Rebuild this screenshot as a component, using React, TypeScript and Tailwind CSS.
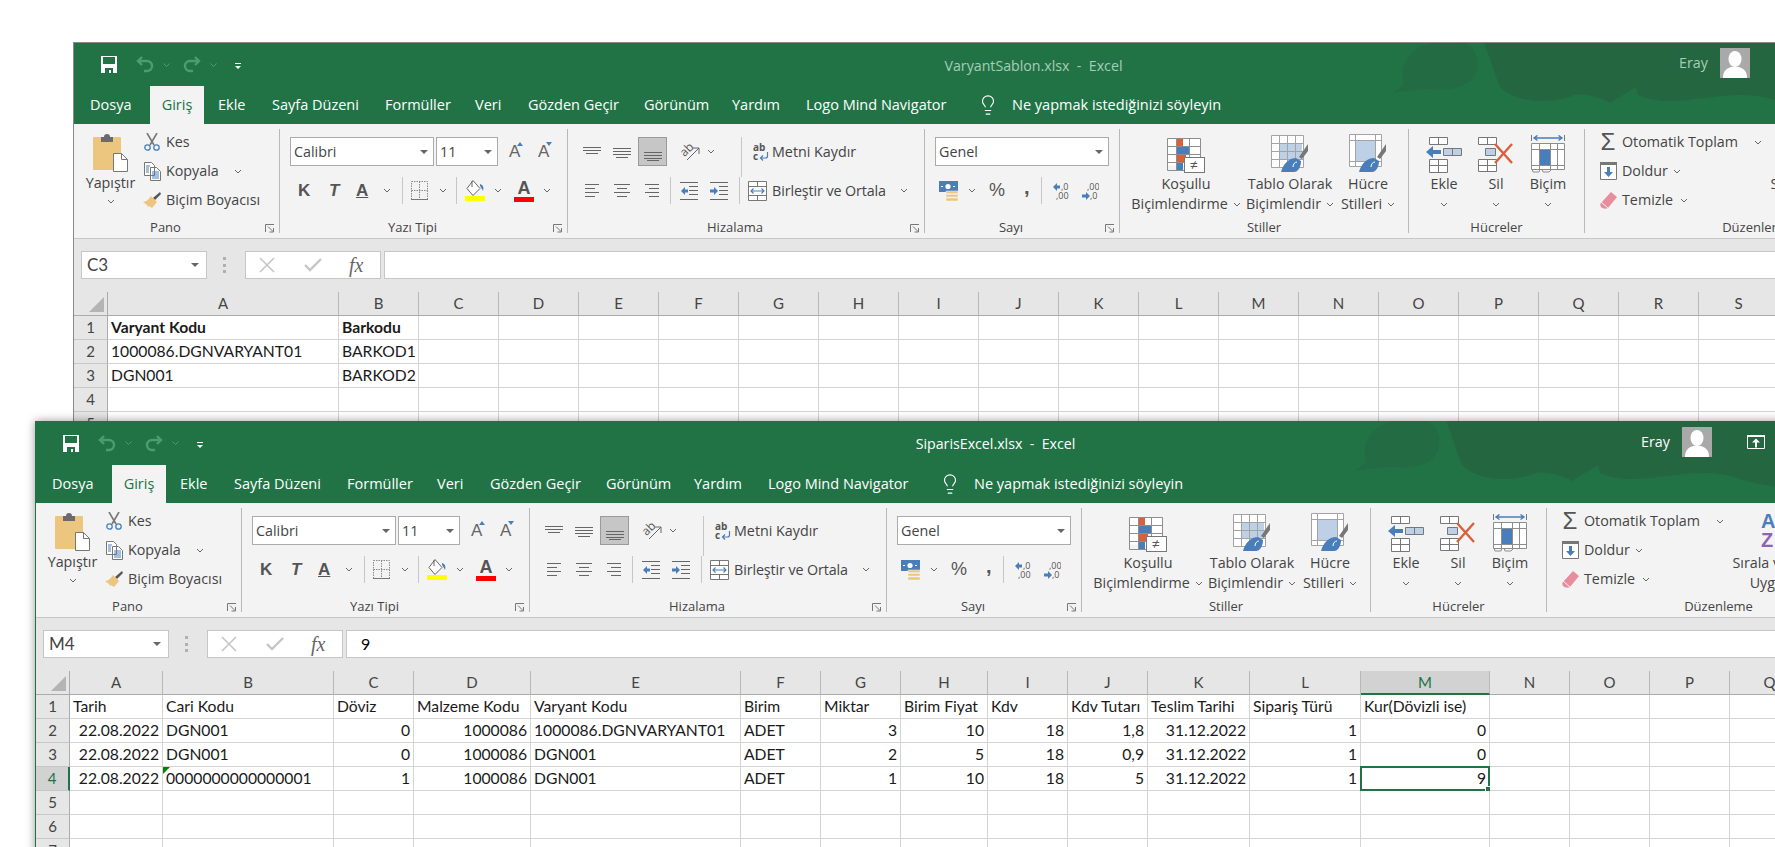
import { ReactNode } from 'react';
import { Lightbulb } from 'lucide-react';

const BLUE = '#4a7ebb';
const LIGHT = '#bdd0e6';
const RED = '#d9603b';

const Chevron = ({ className = '' }: { className?: string }) => (
  <svg width="8" height="5" viewBox="0 0 8 5" className={`shrink-0 ${className}`}>
    <path d="M1 1l3 3 3-3" fill="none" stroke="#666" strokeWidth="1" />
  </svg>
);

const Caret = () => (
  <svg width="8" height="4" viewBox="0 0 8 4" className="shrink-0">
    <path d="M0 0h8L4 4z" fill="#666" />
  </svg>
);

const Launcher = () => (
  <svg width="10" height="9" viewBox="0 0 10 9">
    <path d="M.5 8V.5H9M3 2.5l5 5M8.5 4v4H4.5" fill="none" stroke="#777" />
  </svg>
);

const VSep = ({ className = 'h-[28px]' }: { className?: string }) => <div className={`w-px bg-[#c6c6c6] shrink-0 ${className}`} />;

// lines for the alignment buttons, each is [x, y, width]
const Lines = ({ w, h, rows }: { w: number; h: number; rows: number[][] }) => (
  <svg width={w} height={h} viewBox={`0 0 ${w} ${h}`} className="shrink-0">
    {rows.map((r, i) => (
      <rect key={i} x={r[0]} y={r[1]} width={r[2]} height="1" fill="#666" />
    ))}
  </svg>
);

const Save = () => (
  <svg width="16" height="17" viewBox="0 0 16 17">
    <path d="M0 0h16v17H0z" fill="#fff" />
    <path d="M2 1h12v7H2zM4 12h8v5h-2v-3H8v3H4z" fill="#217346" />
  </svg>
);

const Undo = ({ flip = false }: { flip?: boolean }) => (
  <svg width="18" height="17" viewBox="0 0 18 17" style={flip ? { transform: 'scaleX(-1)' } : undefined}>
    <path d="M6 1L2 5l4 4M2 5h9a4.5 4.5 0 0 1 0 10H8" fill="none" stroke="#4c9c70" strokeWidth="2.4" />
  </svg>
);

const Clipboard = () => (
  <svg width="35" height="39" viewBox="0 0 35 39">
    <rect x="0" y="4" width="28" height="33" rx="1" fill="#ecc67f" />
    <path d="M8 4h3a3 3 0 0 1 6 0h3v5H8z" fill="#6b6b6b" />
    <path d="M20.5 20.5h8l6 6v12h-14z" fill="#fff" stroke="#777" />
    <path d="M28.5 20.5v6h6" fill="none" stroke="#777" />
  </svg>
);

const Scissors = () => (
  <svg width="16" height="18" viewBox="0 0 16 18">
    <path d="M3 0l7 12M13 0L6 12" stroke="#777" strokeWidth="1.6" fill="none" />
    <circle cx="3.5" cy="14.5" r="2.7" fill="none" stroke={BLUE} strokeWidth="1.3" />
    <circle cx="12.5" cy="14.5" r="2.7" fill="none" stroke={BLUE} strokeWidth="1.3" />
  </svg>
);

const Copy = () => (
  <svg width="17" height="19" viewBox="0 0 17 19">
    <path d="M.5.5h7l3 3v10H.5zM6.5 5.5h6l4 4v9h-10z" fill="#fff" stroke="#777" />
    <path d="M2 4h4M2 6h3M2 8h3M2 10h3M8 10h7M8 12h7M8 14h7M8 16h7" stroke={BLUE} />
  </svg>
);

const Brush = () => (
  <svg width="18" height="17" viewBox="0 0 18 17">
    <path d="M17 0l1 2-6 6-2-2z" fill="#555" />
    <path d="M8 4l6 6-5 6-3-2-1 1-1-2-4-3c3 0 6-3 8-6z" fill="#ecc67f" />
  </svg>
);

const BordersIcon = () => (
  <svg width="17" height="19" viewBox="0 0 17 19">
    <path d="M.5.5h16v18H.5zM.5 9.5h16M8.5.5v18" fill="none" stroke="#8a8a8a" strokeDasharray="1.5 1" />
    <path d="M0 18.5h17" stroke="#777" />
  </svg>
);

const FillIcon = () => (
  <svg width="20" height="21" viewBox="0 0 20 21">
    <path d="M8 .5l-6 8 6 7 7-7z" fill="#fff" stroke="#666" />
    <path d="M7 1v6" stroke="#666" />
    <path d="M15 4c3 1 4 3 3 7-1-2-2-4-3-5z" fill={BLUE} />
    <rect x="0" y="16" width="20" height="5" fill="#ffff00" />
  </svg>
);

const OrientIcon = () => (
  <svg width="19" height="19" viewBox="0 0 19 19">
    <text x="0" y="11" fontSize="12" fill="#555" fontFamily="Open Sans" transform="rotate(-45 7 9)">ab</text>
    <path d="M6 18L18 6M12 6h6v6" fill="none" stroke="#666" />
  </svg>
);

const WrapIcon = () => (
  <svg width="16" height="18" viewBox="0 0 16 18">
    <text x="0" y="8" fontSize="10" fontWeight="700" fill="#555" fontFamily="Open Sans">ab</text>
    <text x="0" y="17" fontSize="10" fontWeight="700" fill="#555" fontFamily="Open Sans">c</text>
    <path d="M14.5 9v4a2 2 0 0 1-2 2H8M10 12.5L7.5 15l2.5 2.5" fill="none" stroke={BLUE} strokeWidth="1.2" />
  </svg>
);

const MergeIcon = () => (
  <svg width="19" height="20" viewBox="0 0 19 20">
    <path d="M.5.5h18v19H.5zM.5 5.5h18M.5 14.5h18M9.5.5v5M9.5 14.5v5" fill="#fff" stroke="#777" />
    <path d="M3 10h13M5.5 7.5L3 10l2.5 2.5M13.5 7.5L16 10l-2.5 2.5" fill="none" stroke={BLUE} strokeWidth="1.2" />
  </svg>
);

const IndentIcon = ({ out = false }: { out?: boolean }) => (
  <svg width="18" height="18" viewBox="0 0 18 18">
    <path d="M0 .5h18M0 17.5h18M9 4.5h9M9 8.5h9M9 12.5h9" stroke="#666" />
    <path d={out ? 'M1 9l4-4v2.5h3v3H5V13z' : 'M8 9L4 5v2.5H0v3h4V13z'} fill={BLUE} />
  </svg>
);

const MoneyIcon = () => (
  <svg width="20" height="20" viewBox="0 0 20 20">
    <rect x="0" y="0" width="19" height="11" fill={BLUE} />
    <circle cx="9" cy="5.5" r="2.6" fill="#fff" />
    <rect x="2" y="5" width="2" height="1" fill="#fff" />
    <rect x="14" y="5" width="2" height="1" fill="#fff" />
    <path d="M7 10h12v2.5H7zM7 13.5h12V16H7zM7 17h12v3H7z" fill="#ecc67f" stroke="#f3f3f3" strokeWidth=".5" />
  </svg>
);

const DecIcon = ({ more = false }: { more?: boolean }) => (
  <svg width="17" height="18" viewBox="0 0 17 18">
    <text x={more ? 8 : 5} y="8" fontSize="9" fill="#555" fontFamily="Open Sans">{more ? ',0' : ',00'}</text>
    <text x={more ? 3 : 8} y="17" fontSize="9" fill="#555" fontFamily="Open Sans">{more ? ',00' : ',0'}</text>
    <path d={more ? 'M0 5l4-4v2.5h3v3H4V9z' : 'M8 14l-4-4v2.5H0v3h4V18z'} fill={BLUE} />
  </svg>
);

const CondIcon = () => (
  <svg width="38" height="35" viewBox="0 0 38 35">
    <path d="M.5.5h33v27H.5z" fill="#fff" />
    <path d="M10 1h6v7h-6z" fill={RED} />
    <path d="M10 9h12v7H10z" fill={BLUE} />
    <path d="M10 17h9v7h-9z" fill={RED} />
    <path d="M10 25h6v8h-6z" fill={BLUE} />
    <path d="M.5.5h33v32H.5zM.5 8.5h33M.5 16.5h33M.5 24.5h33M9.5.5v32M22.5.5v32" fill="none" stroke="#8d8d8d" />
    <rect x="17.5" y="19.5" width="20" height="15" fill="#fff" stroke="#777" />
    <text x="23" y="32" fontSize="14" fill="#555" fontFamily="Open Sans">≠</text>
  </svg>
);

const BrushTip = () => (
  <g>
    <path d="M37 10l-9 13 3 2 6-8z" fill="#777" />
    <path d="M10 38c2-8 8-14 15-14l5 3c0 6-3 11-7 11z" fill={BLUE} />
    <path d="M22 33c0-3 2-5 4-5" fill="none" stroke="#fff" />
  </g>
);

const TableIcon = () => (
  <svg width="38" height="39" viewBox="0 0 38 39">
    <path d="M.5 1.5h32v32H.5z" fill="#fff" />
    <path d="M9 9h22v16H9z" fill={LIGHT} />
    <path d="M.5 1.5h32v32H.5zM.5 9.5h32M.5 17.5h32M.5 25.5h32M8.5 1.5v32M16.5 1.5v32M24.5 1.5v32" fill="none" stroke="#a3a3a3" />
    <BrushTip />
  </svg>
);

const StyleIcon = () => (
  <svg width="38" height="39" viewBox="0 0 38 39">
    <path d="M.5.5h32v32H.5z" fill="#fff" />
    <path d="M7 7h19v20H7z" fill={LIGHT} />
    <path d="M.5.5h32v32H.5zM.5 6.5h32M.5 27.5h32M6.5.5v32M26.5.5v32" fill="none" stroke="#a3a3a3" />
    <BrushTip />
  </svg>
);

const InsertIcon = () => (
  <svg width="36" height="36" viewBox="0 0 36 36">
    <path d="M3.5.5h18v7h-18zM12.5.5v7M3.5 22.5h18v13h-18zM3.5 28.5h18M12.5 22.5v13" fill="#fff" stroke="#777" />
    <path d="M17.5 11.5h18v7h-18zM26.5 11.5v7" fill={LIGHT} stroke="#777" />
    <path d="M0 15l7-6v4h8v4H7v4z" fill={BLUE} />
  </svg>
);

const DeleteIcon = () => (
  <svg width="36" height="36" viewBox="0 0 36 36">
    <path d="M.5.5h18v7H.5zM9.5.5v7M.5 22.5h18v12H.5zM.5 28.5h18M9.5 22.5v12" fill="#fff" stroke="#777" />
    <path d="M7.5 11.5h10v7h-10z" fill={LIGHT} stroke="#777" />
    <path d="M17 7l17 19M34 7L17 26" stroke={RED} strokeWidth="2.4" />
  </svg>
);

const FormatIcon = () => (
  <svg width="35" height="38" viewBox="0 0 35 38">
    <path d="M.5 0v6M33.5 0v6" stroke="#777" />
    <path d="M3 3h28M6.5 .5L3 3l3.5 2.5M27.5 .5L31 3l-3.5 2.5" fill="none" stroke={BLUE} strokeWidth="1.4" />
    <path d="M.5 8.5h33v26H.5z" fill="#fff" />
    <path d="M9 15h10v16H9z" fill={BLUE} />
    <path d="M.5 8.5h33v26H.5zM.5 14.5h33M.5 30.5h33M8.5 8.5v26M19.5 8.5v26M26.5 8.5v26" fill="none" stroke="#8d8d8d" />
    <path d="M1 34l1 3h6l1-3M11 34l1 3h6l3-3" fill="none" stroke="#8d8d8d" />
  </svg>
);

const FillDown = () => (
  <svg width="17" height="18" viewBox="0 0 17 18">
    <path d="M.5.5h16v17H.5z" fill="#fff" stroke="#777" />
    <path d="M0 0h17v3H0z" fill="#777" />
    <path d="M8.5 15l-4.5-5h3V5h3v5h3z" fill={BLUE} />
  </svg>
);

const Eraser = () => (
  <svg width="17" height="17" viewBox="0 0 17 17">
    <path d="M11 0l6 5-9 11c-2 1-5 1-7-1-1-2-1-3 0-4z" fill="#e98d9d" />
    <path d="M1 10l7 6" stroke="#f3f3f3" />
  </svg>
);

const Avatar = () => (
  <svg width="30" height="30" viewBox="0 0 30 30" className="shrink-0">
    <rect width="30" height="30" fill="#a9a9a9" />
    <ellipse cx="15" cy="11" rx="6.5" ry="8" fill="#fff" />
    <path d="M3 30c0-7 3-9 8-11h8c5 2 8 4 8 11z" fill="#fff" />
  </svg>
);

const SmallRow = ({ icon, label, width, chevron }: { icon: ReactNode; label: string; width: number; chevron?: string }) => (
  <div className="flex items-center h-[26px]">
    <div className="w-[18px] flex justify-center shrink-0">{icon}</div>
    <span className="ml-[5px] whitespace-nowrap" style={{ width }}>{label}</span>
    {chevron && <Chevron className={chevron} />}
  </div>
);

const BigButton = ({ icon, lines, width, chevron = true }: { icon: ReactNode; lines: string[]; width: number; chevron?: boolean }) => (
  <div className="flex flex-col items-center shrink-0" style={{ width }}>
    <div className="h-[44px] flex items-end justify-center">{icon}</div>
    <div className="h-[20px] leading-[20px] mt-[1px] whitespace-nowrap">{lines[0]}</div>
    <div className="h-[20px] flex items-center gap-[5px] whitespace-nowrap">
      {lines[1] && <span>{lines[1]}</span>}
      {chevron && <Chevron />}
    </div>
  </div>
);

const Group = ({ width, label, launcher = true, children }: { width: number; label: string; launcher?: boolean; children: ReactNode }) => (
  <>
    <div className="flex flex-col shrink-0 h-[109px]" style={{ width }}>
      <div className="h-[89px]">{children}</div>
      <div className={`relative h-[20px] leading-[19px] text-center text-[13px] ${launcher ? 'pr-[22px]' : ''}`}>
        {label}
        {launcher && (
          <div className="absolute right-[4px] top-[6px] flex">
            <Launcher />
          </div>
        )}
      </div>
    </div>
    <div className="w-px h-[104px] bg-[#b9b9b9] shrink-0" />
  </>
);

const Ribbon = () => (
  <div className="flex h-[114px] pt-[5px] bg-[#f3f3f3] text-[#444] text-[14.3px] overflow-hidden">
    <Group width={205} label="Pano">
      <div className="flex">
        <div className="ml-[4px] w-[65px] flex flex-col items-center">
          <div className="mt-[4px] h-[39px]">
            <Clipboard />
          </div>
          <div className="mt-[1px] h-[20px] leading-[20px]">Yapıştır</div>
          <Chevron className="mt-[6px]" />
        </div>
        <div className="flex flex-col gap-[3px]">
          <SmallRow icon={<Scissors />} label="Kes" width={30} />
          <SmallRow icon={<Copy />} label="Kopyala" width={53} chevron="ml-[15px]" />
          <SmallRow icon={<Brush />} label="Biçim Boyacısı" width={94} />
        </div>
      </div>
    </Group>

    <Group width={287} label="Yazı Tipi">
      <div className="flex items-center mt-[8px] h-[29px] ml-[10px]">
        <div className="w-[144px] h-[29px] bg-white border border-[#ababab] flex items-center justify-between pl-[3px] pr-[5px]">
          <span>Calibri</span>
          <Caret />
        </div>
        <div className="ml-[2px] w-[62px] h-[29px] bg-white border border-[#ababab] flex items-center justify-between pl-[3px] pr-[5px]">
          <span>11</span>
          <Caret />
        </div>
        <div className="ml-[11px] w-[16px] h-[20px] flex items-start">
          <span className="text-[17px] leading-[20px] text-[#666] font-['Liberation_Sans']">A</span>
          <svg width="6" height="4" viewBox="0 0 6 4" className="-ml-[3px]">
            <path d="M0 4l3-4 3 4z" fill={BLUE} />
          </svg>
        </div>
        <div className="ml-[13px] w-[16px] h-[20px] flex items-start">
          <span className="text-[17px] leading-[20px] text-[#666] font-['Liberation_Sans']">A</span>
          <svg width="6" height="4" viewBox="0 0 6 4" className="-ml-[3px]">
            <path d="M0 0l3 4 3-4z" fill={BLUE} />
          </svg>
        </div>
      </div>
      <div className="flex items-center mt-[11px] h-[27px] font-['Liberation_Sans'] text-[#555]">
        <span className="ml-[18px] w-[11px] text-[17px] font-bold">K</span>
        <span className="ml-[20px] w-[11px] text-[17px] font-bold italic">T</span>
        <span className="ml-[16px] w-[15px] text-[17px] font-bold underline">A</span>
        <Chevron className="ml-[12px]" />
        <VSep className="ml-[11px] h-[27px]" />
        <div className="ml-[8px] flex"><BordersIcon /></div>
        <Chevron className="ml-[11px]" />
        <VSep className="ml-[9px] h-[27px]" />
        <div className="ml-[8px] flex"><FillIcon /></div>
        <Chevron className="ml-[9px]" />
        <div className="ml-[12px] w-[20px] flex flex-col items-center">
          <span className="text-[18px] leading-[16px] font-bold">A</span>
          <div className="w-[20px] h-[5px] bg-[#ff0000] mt-[1px]" />
        </div>
        <Chevron className="ml-[9px]" />
      </div>
    </Group>

    <Group width={356} label="Hizalama">
      <div className="flex items-center mt-[8px] h-[29px]">
        <div className="ml-[15px] flex"><Lines w={18} h={18} rows={[[0, 4, 18], [0, 7, 18], [3, 10, 12]]} /></div>
        <div className="ml-[12px] flex"><Lines w={18} h={18} rows={[[0, 5, 18], [0, 8, 18], [0, 11, 18], [3, 14, 12]]} /></div>
        <div className="ml-[7px] w-[29px] h-[29px] bg-[#c6c6c6] border border-[#9a9a9a] flex items-center justify-center">
          <Lines w={18} h={18} rows={[[0, 9, 18], [0, 12, 18], [0, 15, 18], [3, 17, 12]]} />
        </div>
        <VSep className="ml-[4px]" />
        <div className="ml-[9px] flex"><OrientIcon /></div>
        <Chevron className="ml-[7px]" />
        <VSep className="ml-[26px] h-[40px] self-start" />
        <div className="ml-[11px] flex"><WrapIcon /></div>
        <span className="ml-[3px] whitespace-nowrap">Metni Kaydır</span>
      </div>
      <div className="flex items-center mt-[11px] h-[27px]">
        <div className="ml-[17px] flex"><Lines w={14} h={13} rows={[[0, 0, 14], [0, 4, 10], [0, 8, 14], [0, 12, 10]]} /></div>
        <div className="ml-[15px] flex"><Lines w={16} h={13} rows={[[0, 0, 16], [3, 4, 10], [0, 8, 16], [3, 12, 10]]} /></div>
        <div className="ml-[15px] flex"><Lines w={14} h={13} rows={[[0, 0, 14], [4, 4, 10], [0, 8, 14], [4, 12, 10]]} /></div>
        <VSep className="ml-[11px] h-[27px]" />
        <div className="ml-[9px] flex"><IndentIcon out /></div>
        <div className="ml-[12px] flex"><IndentIcon /></div>
        <VSep className="ml-[11px] h-[27px]" />
        <div className="ml-[8px] flex"><MergeIcon /></div>
        <span className="ml-[5px] w-[113px] whitespace-nowrap tracking-[-0.1px]">Birleştir ve Ortala</span>
        <Chevron className="ml-[15px]" />
      </div>
    </Group>

    <Group width={194} label="Sayı">
      <div className="mt-[8px] ml-[10px] w-[174px] h-[29px] bg-white border border-[#ababab] flex items-center justify-between pl-[3px] pr-[5px]">
        <span>Genel</span>
        <Caret />
      </div>
      <div className="flex items-center mt-[11px] h-[27px]">
        <div className="ml-[14px] flex"><MoneyIcon /></div>
        <Chevron className="ml-[9px]" />
        <span className="ml-[13px] w-[17px] text-[18px] font-['Liberation_Sans'] text-[#555]">%</span>
        <span className="ml-[18px] w-[5px] text-[20px] font-bold font-['Liberation_Sans'] text-[#555] leading-[12px] -mt-[8px]">,</span>
        <VSep className="ml-[12px] h-[27px]" />
        <div className="ml-[11px] flex"><DecIcon more /></div>
        <div className="ml-[12px] flex"><DecIcon /></div>
      </div>
    </Group>

    <Group width={288} label="Stiller" launcher={false}>
      <div className="flex ml-[6px]">
        <BigButton icon={<CondIcon />} lines={['Koşullu', 'Biçimlendirme']} width={120} />
        <BigButton icon={<TableIcon />} lines={['Tablo Olarak', 'Biçimlendir']} width={88} />
        <BigButton icon={<StyleIcon />} lines={['Hücre', 'Stilleri']} width={68} />
      </div>
    </Group>

    <Group width={175} label="Hücreler" launcher={false}>
      <div className="flex ml-[9px]">
        <BigButton icon={<InsertIcon />} lines={['Ekle', '']} width={52} />
        <BigButton icon={<DeleteIcon />} lines={['Sil', '']} width={52} />
        <BigButton icon={<FormatIcon />} lines={['Biçim', '']} width={52} />
      </div>
    </Group>

    <Group width={343} label="Düzenleme" launcher={false}>
      <div className="flex ml-[14px]">
        <div className="flex flex-col gap-[3px] w-[166px]">
          <SmallRow icon={<span className="text-[24px] leading-none text-[#555] font-['Liberation_Sans']">Σ</span>} label="Otomatik Toplam" width={117} chevron="ml-[15px]" />
          <SmallRow icon={<FillDown />} label="Doldur" width={46} chevron="ml-[5px]" />
          <SmallRow icon={<Eraser />} label="Temizle" width={52} chevron="ml-[6px]" />
        </div>
        <BigButton
          icon={
            <div className="w-[36px] h-[40px] flex flex-col font-bold text-[20px] leading-[19px] font-['Liberation_Sans']">
              <span className="text-[#4a7ebb]">A</span>
              <span className="text-[#8e63b5]">Z</span>
            </div>
          }
          lines={['Sırala ve Filtre', 'Uygula']}
          width={104}
        />
      </div>
    </Group>
  </div>
);

const TABS = [
  { label: 'Dosya', w: 60 },
  { label: 'Giriş', w: 54, active: true },
  { label: 'Ekle', w: 68, pl: true },
  { label: 'Sayfa Düzeni', w: 113 },
  { label: 'Formüller', w: 90 },
  { label: 'Veri', w: 53 },
  { label: 'Gözden Geçir', w: 116 },
  { label: 'Görünüm', w: 88 },
  { label: 'Yardım', w: 74 },
  { label: 'Logo Mind Navigator', w: 174 },
];

const TitleBar = ({ title, active }: { title: string; active: boolean }) => (
  <div className={`relative h-[82px] bg-[#217346] overflow-hidden ${active ? '' : 'border-t border-[#8a8a8a]'}`}>
    <svg width="1918" height="82" viewBox="0 0 1918 82" className="absolute left-0 top-0">
      <path d="M1318 50c6-4 10-6 12-10-6-18 8-40 34-40h28c10 6 14 18 10 30-6 14-26 18-44 16-12 0-26 2-40 4z" fill="#236b42" />
      <path d="M1410 0c6 14 10 30 16 44 18 18 56 16 74 8 14-2 28 4 36 8l26-16 2 8c40 18 90-12 140 6 60 20 120 0 214-2V0z" fill="#24663f" />
    </svg>
    <div className={`relative grid grid-cols-[1fr_auto_1fr] items-center ${active ? 'h-[44px]' : 'h-[43px]'}`}>
      <div className="flex items-center pl-[27px]">
        <Save />
        <div className="ml-[19px] flex"><Undo /></div>
        <svg width="7" height="4" viewBox="0 0 7 4" className="ml-[9px]"><path d="M.5.5l3 3 3-3" fill="none" stroke="#4c9c70" /></svg>
        <div className="ml-[13px] flex"><Undo flip /></div>
        <svg width="7" height="4" viewBox="0 0 7 4" className="ml-[9px]"><path d="M.5.5l3 3 3-3" fill="none" stroke="#4c9c70" /></svg>
        <svg width="6" height="6" viewBox="0 0 6 6" className="ml-[18px] mt-[3px]"><path d="M0 0h6v1H0zM0 3h6L3 6z" fill="#fff" /></svg>
      </div>
      <div className={`text-[14.2px] whitespace-nowrap mt-[2px] ${active ? 'text-white' : 'text-[#a6cdb6]'}`}>{title}&nbsp;&nbsp;-&nbsp;&nbsp;Excel</div>
      <div className={`flex items-center justify-end pr-[190px] text-[14.3px] -mt-[1px] ${active ? 'text-white' : 'text-[#a6cdb6]'}`}>
        <span className="w-[28px] mr-[13px] -mt-[2px]">Eray</span>
        <div className="-mt-[2px] flex"><Avatar /></div>
        <svg width="18" height="14" viewBox="0 0 18 14" className="ml-[35px] -mt-[2px]">
          <path d="M.5.5h17v13H.5z" fill="none" stroke="#fff" />
          <path d="M0 0h18v2H0zM9 3.5L5 7.5h3v5h2v-5h3z" fill="#fff" />
        </svg>
      </div>
    </div>
    <div className="relative flex h-[38px] pl-[16px] text-white text-[14.5px]">
      {TABS.map((t) => (
        <div
          key={t.label}
          className={`shrink-0 flex items-center whitespace-nowrap ${t.active ? 'bg-[#f3f3f3] text-[#217346] justify-center' : ''} ${t.pl ? 'pl-[14px]' : ''}`}
          style={{ width: t.w }}
        >
          {t.label}
        </div>
      ))}
      <div className="w-[32px] flex items-center -ml-[3px]">
        <Lightbulb size={22} strokeWidth={1.25} />
      </div>
      <div className="flex items-center ml-[3px] whitespace-nowrap">Ne yapmak istediğinizi söyleyin</div>
    </div>
  </div>
);

const FormulaBar = ({ cell, value }: { cell: string; value: string }) => (
  <div className="h-[54px] bg-[#e6e6e6] border-t border-[#c6c6c6] pt-[12px] flex items-start text-[#444]">
    <div className="ml-[7px] w-[126px] h-[28px] bg-white border border-[#c6c6c6] flex items-center justify-between pl-[5px] pr-[7px] text-[17px] font-['Lato']">
      <span>{cell}</span>
      <Caret />
    </div>
    <div className="ml-[16px] w-[3px] h-[16px] mt-[6px] border-l-[3px] border-dotted border-[#b0b0b0]" />
    <div className="ml-[19px] w-[136px] h-[28px] bg-white border border-[#c6c6c6] flex items-center">
      <svg width="16" height="16" viewBox="0 0 16 16" className="ml-[13px]">
        <path d="M1 1l14 14M15 1L1 15" stroke="#c6c6c6" strokeWidth="1.6" />
      </svg>
      <svg width="18" height="14" viewBox="0 0 18 14" className="ml-[29px]">
        <path d="M1 7l5 5L17 1" fill="none" stroke="#c6c6c6" strokeWidth="2.4" />
      </svg>
      <span className="ml-[27px] font-['Liberation_Serif'] italic text-[20px] text-[#666]">fx</span>
    </div>
    <div className="ml-[3px] flex-1 h-[28px] bg-white border border-[#c6c6c6] flex items-center pl-[14px] text-[16px] font-['Lato'] text-black">{value}</div>
  </div>
);

type Cell = { t: string; right?: boolean; bold?: boolean; flag?: boolean };

const Sheet = ({ cols, rows, rowCount, selected }: { cols: { l: string; w: number }[]; rows: Cell[][]; rowCount: number; selected?: { row: number; col: number } }) => (
  <div className="font-['Lato'] text-[15.7px] leading-none bg-white">
    <div className="flex h-[24px] bg-[#e6e6e6] text-[#444]">
      <div className="w-[34px] shrink-0 border-r border-b border-[#ababab] flex items-end justify-end pr-[3px] pb-[3px]">
        <svg width="15" height="15" viewBox="0 0 15 15"><path d="M15 0v15H0z" fill="#b4b4b4" /></svg>
      </div>
      {cols.map((c, i) => {
        const sel = selected?.col === i;
        return (
          <div
            key={c.l}
            className={`shrink-0 flex items-center justify-center border-r border-[#b8b8b8] text-[15px] ${sel ? 'bg-[#d2d2d2] text-[#217346] border-b-2 border-b-[#217346]' : 'border-b border-b-[#ababab]'}`}
            style={{ width: c.w }}
          >
            {c.l}
          </div>
        );
      })}
    </div>
    {Array.from({ length: rowCount }).map((_, r) => (
      <div key={r} className="flex h-[24px]">
        <div className={`w-[34px] shrink-0 flex items-center justify-center text-[15px] border-b border-[#c6c6c6] border-r ${selected?.row === r ? 'bg-[#d2d2d2] text-[#217346] border-r-2 border-r-[#217346]' : 'bg-[#e6e6e6] text-[#444] border-r-[#ababab]'}`}>
          {r + 1}
        </div>
        {cols.map((c, i) => {
          const cell = rows[r]?.[i];
          return (
            <div
              key={c.l}
              className={`relative shrink-0 flex items-center px-[3px] whitespace-nowrap border-r border-b border-[#d4d4d4] text-[#1a1a1a] ${cell?.right ? 'justify-end' : ''} ${cell?.bold ? 'font-bold' : ''}`}
              style={{ width: c.w }}
            >
              {cell?.t}
              {cell?.flag && (
                <svg width="7" height="7" viewBox="0 0 7 7" className="absolute left-0 top-0">
                  <path d="M0 0h7L0 7z" fill="#0a7c0a" />
                </svg>
              )}
              {selected?.row === r && selected?.col === i && (
                <div className="absolute -left-px -top-px -right-px -bottom-px border-2 border-[#217346]">
                  <div className="absolute -right-[3px] -bottom-[3px] w-[6px] h-[6px] bg-[#217346] border border-white" />
                </div>
              )}
            </div>
          );
        })}
      </div>
    ))}
  </div>
);

const LETTERS = ['A', 'B', 'C', 'D', 'E', 'F', 'G', 'H', 'I', 'J', 'K', 'L', 'M', 'N', 'O', 'P', 'Q', 'R', 'S', 'T', 'U', 'V', 'W'];

const TOP_WIDTHS = [231, 80];
const BOTTOM_WIDTHS = [93, 171, 80, 117, 210, 80, 80, 87, 80, 80, 102, 111, 129];

const topCols = LETTERS.map((l, i) => ({ l, w: TOP_WIDTHS[i] ?? 80 }));
const bottomCols = LETTERS.map((l, i) => ({ l, w: BOTTOM_WIDTHS[i] ?? 80 }));

const topRows: Cell[][] = [
  [{ t: 'Varyant Kodu', bold: true }, { t: 'Barkodu', bold: true }],
  [{ t: '1000086.DGNVARYANT01' }, { t: 'BARKOD1' }],
  [{ t: 'DGN001' }, { t: 'BARKOD2' }],
];

const order = (date: string, cari: string, doviz: string, varyant: string, miktar: string, fiyat: string, tutar: string, kur: string, flag = false): Cell[] => [
  { t: date, right: true },
  { t: cari, flag },
  { t: doviz, right: true },
  { t: '1000086', right: true },
  { t: varyant },
  { t: 'ADET' },
  { t: miktar, right: true },
  { t: fiyat, right: true },
  { t: '18', right: true },
  { t: tutar, right: true },
  { t: '31.12.2022', right: true },
  { t: '1', right: true },
  { t: kur, right: true },
];

const bottomRows: Cell[][] = [
  ['Tarih', 'Cari Kodu', 'Döviz', 'Malzeme Kodu', 'Varyant Kodu', 'Birim', 'Miktar', 'Birim Fiyat', 'Kdv', 'Kdv Tutarı', 'Teslim Tarihi', 'Sipariş Türü', 'Kur(Dövizli ise)'].map((t) => ({ t })),
  order('22.08.2022', 'DGN001', '0', '1000086.DGNVARYANT01', '3', '10', '1,8', '0'),
  order('22.08.2022', 'DGN001', '0', 'DGN001', '2', '5', '0,9', '0'),
  order('22.08.2022', '0000000000000001', '1', 'DGN001', '1', '10', '5', '9', true),
];

const ExcelWindow = ({ className, title, active, children, cell, value }: { className: string; title: string; active: boolean; children: ReactNode; cell: string; value: string }) => (
  <div className={`absolute w-[1920px] bg-white border-l ${className}`}>
    <TitleBar title={title} active={active} />
    <Ribbon />
    <FormulaBar cell={cell} value={value} />
    {children}
  </div>
);

export default function App() {
  return (
    <div className="relative w-[1775px] h-[847px] overflow-hidden bg-white font-['Open_Sans',sans-serif]">
      <ExcelWindow className="left-[73px] top-[42px] border-[#8a8a8a]" title="VaryantSablon.xlsx" active={false} cell="C3" value="">
        <Sheet cols={topCols} rows={topRows} rowCount={6} />
      </ExcelWindow>
      <ExcelWindow className="left-[35px] top-[421px] border-[#217346] shadow-[0_0_9px_rgba(0,0,0,0.4)]" title="SiparisExcel.xlsx" active cell="M4" value="9">
        <Sheet cols={bottomCols} rows={bottomRows} rowCount={7} selected={{ row: 3, col: 12 }} />
      </ExcelWindow>
    </div>
  );
}
